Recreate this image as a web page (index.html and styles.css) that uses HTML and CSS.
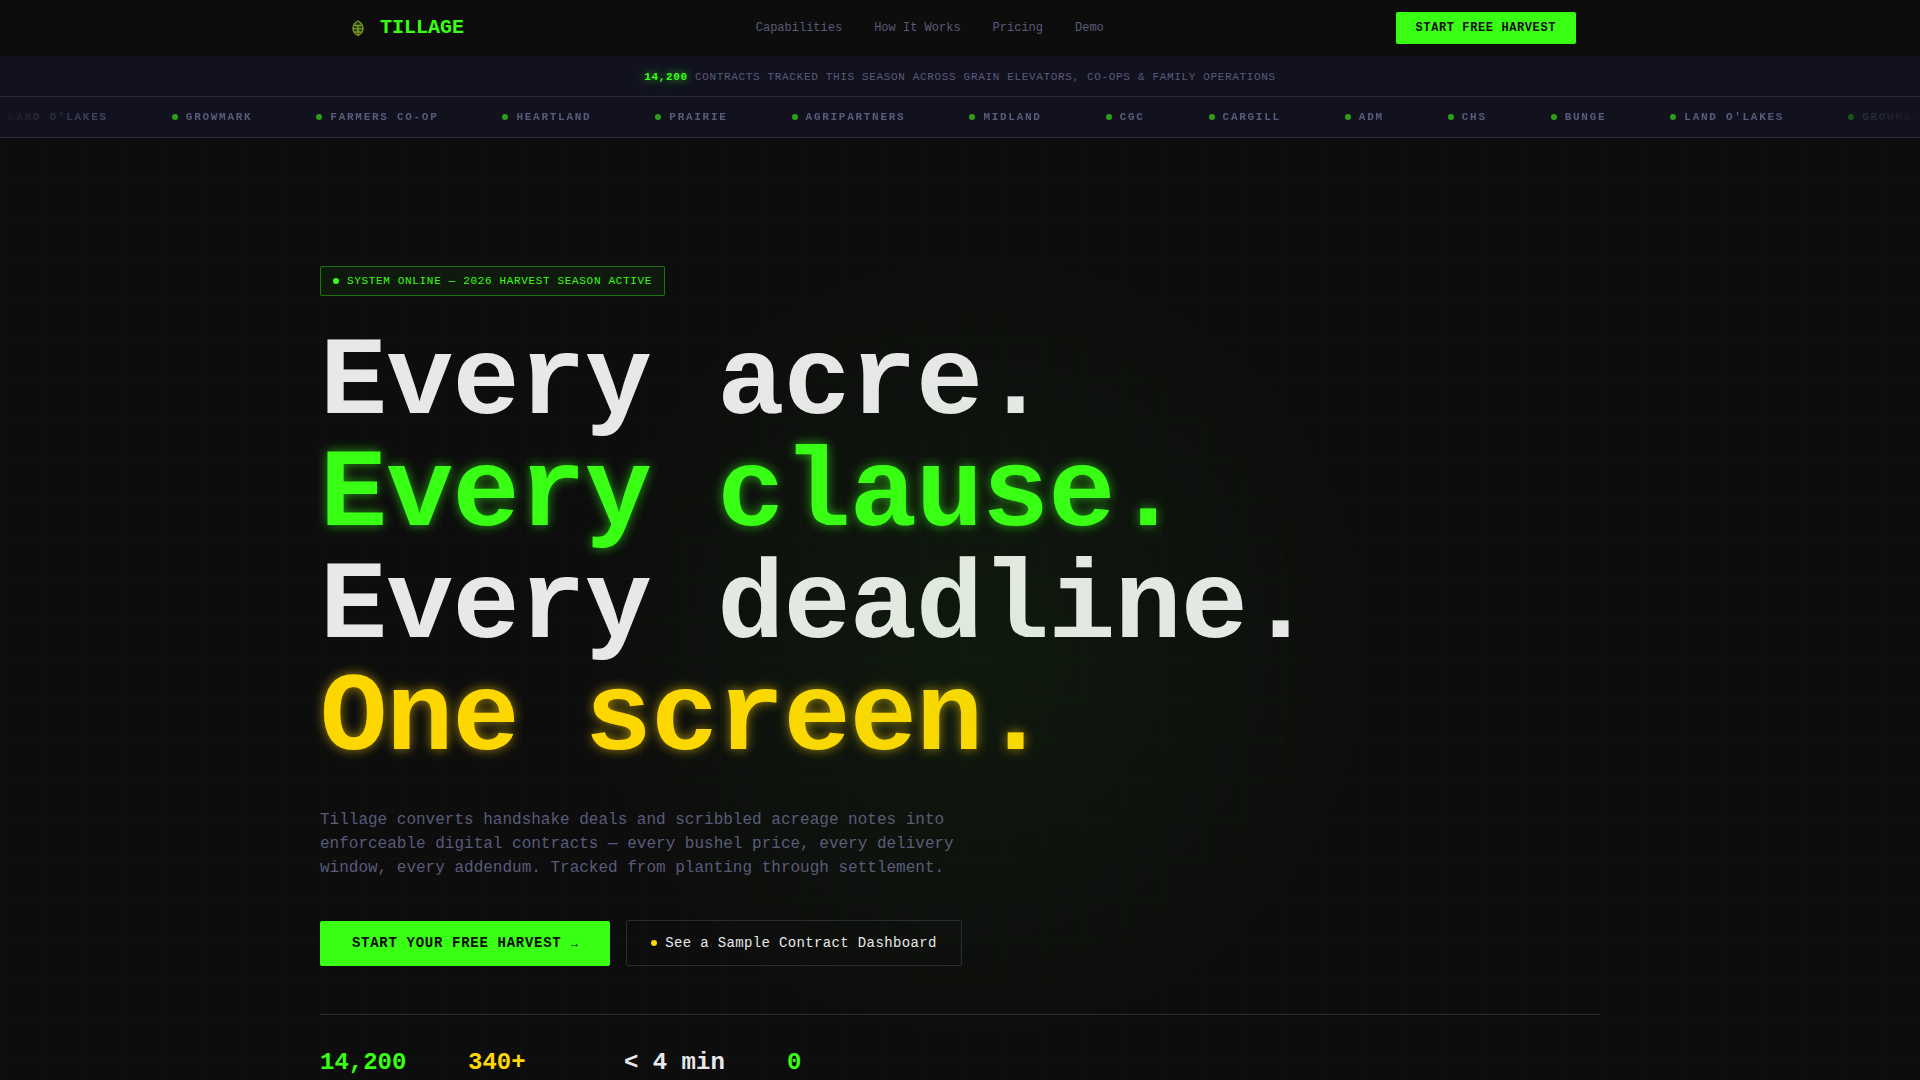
FILE: index.html
```html
<!DOCTYPE html>
<html lang="en">
<head>
<meta charset="utf-8">
<meta name="viewport" content="width=device-width, initial-scale=1">
<title>Tillage</title>
<link rel="stylesheet" href="styles.css">
</head>
<body>
<header class="header">
  <div class="header-inner">
    <a class="logo" href="#">
      <svg class="logo-icon" viewBox="0 0 28 28" width="28" height="28" aria-hidden="true">
        <path d="M14 7c3 1.500 5 4 5 7.500s-2 5.500-5 7c-3-1.500-5-3.500-5-7s2-6 5-7.500z" fill="#39ff14" fill-opacity=".2" stroke="#7f9428" stroke-width="1.300"/>
        <path d="M9 14.800h10M14 12v9M10.500 11.500l7 0M10.500 18l7 0" fill="none" stroke="#98a52e" stroke-width="1"/>
        <path d="M11.500 9.500l2.500 5 2.500-5M11.500 19.500l2.500-4.700 2.500 4.700" fill="none" stroke="#6f8624" stroke-width=".8"/>
      </svg>
      <span>TILLAGE</span>
    </a>
    <nav class="nav">
      <a href="#capabilities">Capabilities</a>
      <a href="#how">How It Works</a>
      <a href="#pricing">Pricing</a>
      <a href="#demo">Demo</a>
    </nav>
    <button class="btn btn-small" type="button">START FREE HARVEST</button>
  </div>
</header>
<p class="banner"><strong>14,200</strong> CONTRACTS TRACKED THIS SEASON ACROSS GRAIN ELEVATORS, CO-OPS &amp; FAMILY OPERATIONS</p>
<div class="ticker">
  <ul class="ticker-track">
    <li>LAND O'LAKES</li>
    <li>GROWMARK</li>
    <li>FARMERS CO-OP</li>
    <li>HEARTLAND</li>
    <li>PRAIRIE</li>
    <li>AGRIPARTNERS</li>
    <li>MIDLAND</li>
    <li>CGC</li>
    <li>CARGILL</li>
    <li>ADM</li>
    <li>CHS</li>
    <li>BUNGE</li>
    <li>LAND O'LAKES</li>
    <li>GROWMARK</li>
  </ul>
</div>
<main class="hero">
  <div class="hero-inner">
    <p class="badge">SYSTEM ONLINE — 2026 HARVEST SEASON ACTIVE</p>
    <h1 class="title">
      <span>Every acre.</span>
      <span class="green">Every clause.</span>
      <span>Every deadline.</span>
      <span class="gold">One screen.</span>
    </h1>
    <p class="lead">Tillage converts handshake deals and scribbled acreage notes into enforceable digital contracts — every bushel price, every delivery window, every addendum. Tracked from planting through settlement.</p>
    <div class="actions">
      <button class="btn btn-large" type="button">START YOUR FREE HARVEST <span class="arrow">→</span></button>
      <button class="btn-ghost" type="button">See a Sample Contract Dashboard</button>
    </div>
    <div class="stats">
      <strong class="stat stat-green">14,200</strong>
      <strong class="stat stat-gold">340+</strong>
      <strong class="stat">&lt; 4 min</strong>
      <strong class="stat stat-green">0</strong>
    </div>
  </div>
</main>
</body>
</html>
```
FILE: styles.css
```css
:root {
  --bg: #0d0d0d;
  --band: #12121f;
  --line: #2a2a35;
  --muted: #5a5a7a;
  --text: #e8e8e8;
  --green: #39ff14;
  --gold: #ffd700;
}

* { box-sizing: border-box; }

body {
  margin: 0;
  min-height: 100vh;
  display: flex;
  flex-direction: column;
  background: var(--bg);
  color: var(--text);
  font-family: "Liberation Mono", "Courier New", monospace;
  font-size: 16px;
  line-height: 24px;
}

a { color: inherit; text-decoration: none; }
p, h1, ul { margin: 0; padding: 0; }

button {
  font-family: inherit;
  border-radius: 2px;
  cursor: pointer;
}

.header-inner {
  max-width: 1280px;
  height: 56px;
  margin: 0 auto;
  padding: 0 24px;
  display: flex;
  align-items: center;
  justify-content: space-between;
}

.logo {
  display: flex;
  align-items: center;
  gap: 8px;
  color: var(--green);
  font-size: 20px;
  font-weight: 700;
}

.nav {
  display: flex;
  gap: 32px;
  color: var(--muted);
  font-size: 12px;
}

.btn {
  border: 0;
  background: var(--green);
  color: var(--bg);
  font-weight: 700;
  letter-spacing: 0.05em;
}

.btn-small {
  padding: 8px 20px;
  font-size: 12px;
  line-height: 16px;
}

.banner {
  padding: 13px 24px 11px;
  background: var(--band);
  color: var(--muted);
  font-size: 11px;
  line-height: 16px;
  letter-spacing: 0.06em;
  text-align: center;
}

.banner strong {
  color: var(--green);
  text-shadow: 0 0 8px rgba(57, 255, 20, 0.8);
}

.ticker {
  overflow: hidden;
  background: var(--band);
  border-top: 1px solid var(--line);
  border-bottom: 1px solid var(--line);
}

.ticker-track {
  display: flex;
  gap: 64px;
  margin-left: -6px;
  padding: 12px 0;
  list-style: none;
  color: var(--muted);
  font-size: 11px;
  font-weight: 700;
  line-height: 16px;
  letter-spacing: 0.156em;
  white-space: nowrap;
  mask-image: linear-gradient(90deg, transparent, #000 8%, #000 92%, transparent);
}

.ticker-track li,
.badge,
.btn-ghost {
  display: flex;
  align-items: center;
  gap: 8px;
}

.ticker-track li { flex: none; }

.ticker-track li::before,
.badge::before,
.btn-ghost::before {
  content: "";
  width: 6px;
  height: 6px;
  border-radius: 50%;
  background: var(--green);
}

.ticker-track li::before { opacity: 0.6; }

.hero {
  position: relative;
  flex: 1;
  padding: 128px 24px 0;
  background-image:
    linear-gradient(rgba(57, 255, 20, 0.015) 1px, transparent 1px),
    linear-gradient(90deg, rgba(57, 255, 20, 0.015) 1px, transparent 1px);
  background-size: 40px 40px;
}

/* Soft glow laid over the headline */
.hero::after {
  content: "";
  position: absolute;
  inset: 0;
  background: radial-gradient(circle at 51% 54%, rgba(57, 255, 20, 0.05), transparent 400px);
  pointer-events: none;
}

.hero-inner {
  max-width: 1280px;
  margin: 0 auto;
}

.badge {
  width: fit-content;
  padding: 6px 12px;
  border: 1px solid rgba(57, 255, 20, 0.4);
  border-radius: 2px;
  background: rgba(57, 255, 20, 0.05);
  color: var(--green);
  font-size: 11px;
  line-height: 16px;
  letter-spacing: 0.06em;
}

.title {
  margin-top: 32px;
  font-size: 112px;
  font-weight: 700;
  line-height: 112px;
  letter-spacing: -1px;
}

.title span { display: block; }

.title .green {
  color: var(--green);
  text-shadow: 0 0 12px rgba(57, 255, 20, 0.6);
}

.title .gold {
  color: var(--gold);
  text-shadow: 0 0 12px rgba(255, 215, 0, 0.6);
}

.lead {
  max-width: 640px;
  margin-top: 32px;
  color: var(--muted);
}

.actions {
  display: flex;
  align-items: center;
  gap: 16px;
  margin-top: 40px;
}

.btn-large {
  padding: 12px 32px;
  font-size: 14px;
  line-height: 20px;
}

.arrow {
  font-size: 12px;
  font-weight: 400;
}

.btn-ghost {
  padding: 12px 24px;
  border: 1px solid var(--line);
  background: transparent;
  color: var(--text);
  font-size: 14px;
  line-height: 20px;
  letter-spacing: 0.025em;
}

.btn-ghost::before { background: var(--gold); }

.stats {
  display: grid;
  grid-template-columns: 100px 108px 115px auto;
  gap: 48px;
  margin-top: 48px;
  padding-top: 32px;
  border-top: 1px solid var(--line);
}

.stat {
  font-size: 24px;
  line-height: 32px;
}

.stat-green { color: var(--green); }
.stat-gold { color: var(--gold); }
```
